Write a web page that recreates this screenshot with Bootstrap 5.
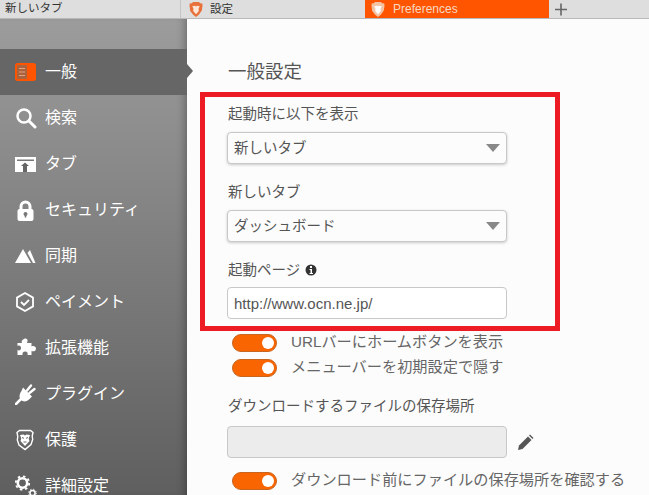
<!DOCTYPE html>
<html lang="ja">
<head>
<meta charset="utf-8">
<title>Preferences</title>
<link href="https://cdn.jsdelivr.net/npm/bootstrap@5.3.0/dist/css/bootstrap.min.css" rel="stylesheet">
<style>
html,body{height:495px;overflow:hidden}
body{background:#fcfcfc;font-family:"Liberation Sans","Noto Sans CJK JP",sans-serif;color:#555}
.tabstrip{height:19px;background:#dedede;border-bottom:1px solid #b8b8b8;font-size:11.500px;color:#333;line-height:17px}
.tabcell{height:18px;padding-left:5px;white-space:nowrap}
.tabcell svg{width:14px;height:15px;flex:none}
.t1{width:181px;border-right:1px solid #c4c4c4}
.t2{width:184px;gap:7px;padding-left:8px}
.t3{width:184px;background:#ff5500;color:#f6d8c2;gap:8px;padding-left:6px;font-size:12px}
.newtab{width:20px;justify-content:center;color:#666;padding-left:0;margin-left:2px}
.shell{height:476px}
.sidenav{width:187px;flex:none;padding-top:30px;background:linear-gradient(#9c9c9c,#5f5f5f);box-shadow:inset -8px 0 8px -6px rgba(0,0,0,.3);position:relative}
.navrow{height:46px;padding-left:15px;color:#fff;font-size:16px;gap:0}
.navrow svg{width:22px;height:22px;flex:none;margin-right:8px}
.navrow.sel{background:#666}
.pointer{position:absolute;left:187px;top:45px;width:0;height:0;border-style:solid;border-width:7px 0 7px 6px;border-color:transparent transparent transparent #666}
.content{padding:0 0 0 40px;width:462px;position:relative}
.pagehead{font-size:18.500px;line-height:26px;margin:40px 0 19px;padding-left:1px;color:#555;font-weight:400}
.fieldlab{font-size:14.500px;line-height:20px;margin-bottom:8px;padding-left:1px;color:#555}
.fieldlab.tight{margin-bottom:7px}
.fieldlab.loose{margin-bottom:10px}
.fieldbox{width:280px;height:32px;border:1px solid #c8c8c8;border-radius:4px;font-size:14.500px;padding:0 6px;color:#555;background-color:#fcfcfc;box-shadow:0 1px 3px rgba(0,0,0,.2)}
select.fieldbox{appearance:none;padding-top:2px;background-image:url("data:image/svg+xml,%3Csvg xmlns='http://www.w3.org/2000/svg' width='14' height='8'%3E%3Cpath d='M0 0h14L7 8z' fill='%23888'/%3E%3C/svg%3E");background-repeat:no-repeat;background-position:right 6px center}
.plain{box-shadow:none;background:#fff;font-family:"Liberation Sans",sans-serif;font-size:15px}
.plain:focus,select.fieldbox:focus{outline:0}
.blockgap{margin-bottom:18px}
.swrow{height:25px;font-size:15.200px;color:#666;padding-left:5px;gap:14px}
.aftfield{margin-top:11px}
.orangesw{width:45px;height:18px;border-radius:9px;background:#f96500;border:1px solid #c8651e;flex:none;position:relative}
.orangesw::after{content:"";position:absolute;right:2px;top:2px;width:12px;height:12px;border-radius:50%;background:#fff}
.rowgap{gap:10px}
.dimbox{background:#ececec;box-shadow:none}
.redmark{position:absolute;left:13px;top:73px;width:360px;height:239px;border:5px solid #ed1c24;pointer-events:none}
.infoico{width:12px;height:12px;margin-left:5px;vertical-align:-1px}
.lastrow{margin-top:10px}
</style>
</head>
<body>
<div class="tabstrip d-flex">
  <div class="tabcell t1">新しいタブ</div>
  <div class="tabcell t2 d-flex align-items-center">
    <svg viewBox="0 0 14 16"><path d="M2 1.500 4 0h6l2 1.500 1.500-.2.500 2.200-.8 5.500L10 13.500 7 16l-3-2.500L.8 9.500 0 3.500.5 1.300z" fill="#e8703a"/><path d="M3 4.500 6 4l1 .7L8 4l3 .5-1.300 2.500L10 9.500 7 13 4 9.500 4.300 7z" fill="#fde6d8"/></svg>
    <span>設定</span>
  </div>
  <div class="tabcell t3 d-flex align-items-center">
    <svg viewBox="0 0 14 16"><path d="M2 1.500 4 0h6l2 1.500 1.500-.2.500 2.200-.8 5.500L10 13.500 7 16l-3-2.500L.8 9.500 0 3.500.5 1.300z" fill="#f3c3a4"/><path d="M3 4.500 6 4l1 .7L8 4l3 .5-1.300 2.500L10 9.500 7 13 4 9.500 4.300 7z" fill="#fff"/></svg>
    <span>Preferences</span>
  </div>
  <div class="tabcell newtab d-flex align-items-center"><svg viewBox="0 0 14 14"><path d="M7 1v12M1 7h12" stroke="#666" stroke-width="1.600" fill="none"/></svg></div>
</div>
<div class="shell d-flex">
  <nav class="sidenav">
    <div class="navrow sel d-flex align-items-center">
      <svg viewBox="0 0 22 22"><rect x="0" y="2" width="21" height="18" rx="2.500" fill="#ff5500"/><rect x="2" y="4" width="10" height="14" rx="1" fill="#a9633f"/><path d="M4 7.500h6M4 11h6M4 14.500h6" stroke="#e2a27d" stroke-width="1"/></svg>
      <span>一般</span>
    </div>
    <div class="navrow d-flex align-items-center">
      <svg viewBox="0 0 22 22"><circle cx="9" cy="9" r="6.500" fill="none" stroke="#fff" stroke-width="2.500"/><path d="M14 14l6 6" stroke="#fff" stroke-width="3" stroke-linecap="round"/></svg>
      <span>検索</span>
    </div>
    <div class="navrow d-flex align-items-center">
      <svg viewBox="0 0 22 22"><path d="M0 4h21v15H0z" fill="#fff"/><path d="M2 6.500h17v1.500H2z" fill="#777"/><path d="M10 9.500l4 3.500h-2v6H8v-6H6z" fill="#666"/></svg>
      <span>タブ</span>
    </div>
    <div class="navrow d-flex align-items-center">
      <svg viewBox="0 0 22 22"><path d="M4.500 11V7.500a6 6 0 0 1 12 0V11h-3V7.500a3 3 0 0 0-6 0V11z" fill="#fff"/><rect x="2.500" y="10" width="16" height="12" rx="2" fill="#fff"/><circle cx="10.500" cy="15" r="2" fill="#777"/><path d="M9.700 15h1.600v3.500H9.700z" fill="#777"/></svg>
      <span>セキュリティ</span>
    </div>
    <div class="navrow d-flex align-items-center">
      <svg viewBox="0 0 22 22"><path d="M0 18 8 4l8 14z" fill="#fff"/><path d="M12.500 8 15 5l5.500 13H18z" fill="#fff"/></svg>
      <span>同期</span>
    </div>
    <div class="navrow d-flex align-items-center">
      <svg viewBox="0 0 22 22"><path d="M10 2l8 4.600v8.800L10 20l-8-4.600V6.600z" fill="none" stroke="#fff" stroke-width="1.800"/><path d="M6 11l3 3 5-5" fill="none" stroke="#fff" stroke-width="1.800"/></svg>
      <span>ペイメント</span>
    </div>
    <div class="navrow d-flex align-items-center">
      <svg viewBox="0 0 22 22"><path d="M9 2c2-1 4 0 3.500 2.500l-.5 1.500h4.500v3.500c2-1 4.500 0 4.500 2.200s-2.500 3.300-4.500 2.300V18h-4c.7-2-.3-3.500-2.300-3.500S7 16 7.500 18H2.500v-5c2 1 3.500 0 3.500-2S4.500 8 2.500 9V6H7C6 4 7 3 9 2z" fill="#fff"/></svg>
      <span>拡張機能</span>
    </div>
    <div class="navrow d-flex align-items-center">
      <svg viewBox="0 0 22 22"><path d="M1 21l4.500-4.500" stroke="#fff" stroke-width="2.500" stroke-linecap="round"/><path d="M8 4.500l9 9-3 3c-2.500 2.500-6 2.500-8 .5s-2-6 .5-9z" fill="#fff"/><path d="M12 7.500l4-5M14.500 10l5-4" stroke="#fff" stroke-width="2.400" stroke-linecap="round"/></svg>
      <span>プラグイン</span>
    </div>
    <div class="navrow d-flex align-items-center">
      <svg viewBox="0 0 22 22"><path d="M4.500 1.500h11l2.500 2-.8 3.500.5 3.500-1.700 5L10 20.500l-6-4.500-1.700-5 .5-3.500L2 3.500z" fill="none" stroke="#fff" stroke-width="1.400"/><path d="M5 6l3.500-.5L10 6.500l1.500-1L15 6l-1.300 3.500.8 2.500L10 17l-4.500-5 .8-2.500z" fill="#fff"/><path d="M7 8.500l2 .8M13 8.500l-2 .8M8.500 13h3" stroke="#666" stroke-width="1"/></svg>
      <span>保護</span>
    </div>
    <div class="navrow d-flex align-items-center">
      <svg viewBox="0 0 22 22"><circle cx="7.500" cy="8" r="4.700" fill="none" stroke="#fff" stroke-width="2.600"/><circle cx="7.500" cy="8" r="6.700" fill="none" stroke="#fff" stroke-width="1.800" stroke-dasharray="2.500 2.800"/><circle cx="17.500" cy="18" r="2.600" fill="none" stroke="#fff" stroke-width="1.500"/><circle cx="17.500" cy="18" r="3.800" fill="none" stroke="#fff" stroke-width="1" stroke-dasharray="1.400 1.600"/></svg>
      <span>詳細設定</span>
    </div>
    <span class="pointer"></span>
  </nav>
  <main class="content">
    <h1 class="pagehead">一般設定</h1>
    <div class="fieldlab">起動時に以下を表示</div>
    <select class="fieldbox blockgap d-block"><option>新しいタブ</option></select>
    <div class="fieldlab">新しいタブ</div>
    <select class="fieldbox blockgap d-block"><option>ダッシュボード</option></select>
    <div class="fieldlab tight">起動ページ<svg class="infoico" viewBox="0 0 12 12"><circle cx="6" cy="6" r="5.500" fill="#333"/><rect x="5" y="2" width="2" height="2" fill="#fff"/><path d="M4.500 5H7v4h1v1H4.500V9h1V6h-1z" fill="#fff"/></svg></div>
    <input class="fieldbox plain d-block" type="text" value="http://www.ocn.ne.jp/">
    <div class="swrow d-flex align-items-center aftfield"><span class="orangesw"></span><span>URLバーにホームボタンを表示</span></div>
    <div class="swrow d-flex align-items-center"><span class="orangesw"></span><span>メニューバーを初期設定で隠す</span></div>
    <div class="fieldlab loose mt-3">ダウンロードするファイルの保存場所</div>
    <div class="d-flex align-items-center rowgap">
      <div class="fieldbox dimbox"></div>
      <svg width="17" height="17" viewBox="0 0 17 17"><path d="M1 16l1-4.500L11 2.500l3.500 3.500-9 9z" fill="#555"/><path d="M12 1.500l1-1 3.500 3.500-1 1z" fill="#555"/></svg>
    </div>
    <div class="swrow d-flex align-items-center lastrow"><span class="orangesw"></span><span>ダウンロード前にファイルの保存場所を確認する</span></div>
    <div class="redmark"></div>
  </main>
</div>
<script src="https://cdn.jsdelivr.net/npm/bootstrap@5.3.0/dist/js/bootstrap.bundle.min.js"></script>
</body>
</html>
